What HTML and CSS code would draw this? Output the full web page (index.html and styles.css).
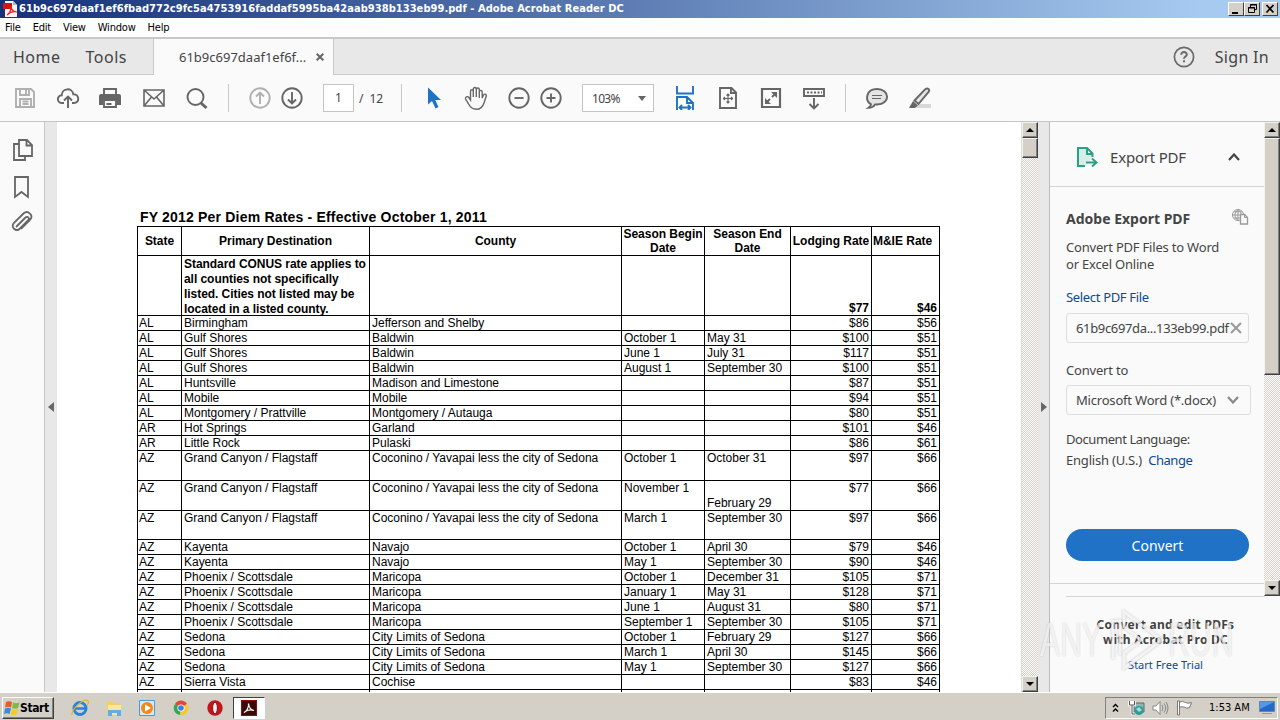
FILE: index.html
```html
<!DOCTYPE html>
<html lang="en">
<head>
  <meta charset="UTF-8" />
  <title>Adobe Acrobat Reader DC</title>
  <link rel="stylesheet" href="styles.css">
</head>
<body>

  <div class="titlebar">
    <svg class="app-icon" width="16" height="16" viewBox="0 0 16 16"><path d="M2 0h8l4 4v12H2z" fill="#f6f6f6"/><path d="M10 0l4 4h-4z" fill="#bbb"/><path d="M0 2h9v6H0z" fill="#d8150c"/><path d="M4 14c3-2 4-5 4-8 1 4 3 5 6 5-4-1-7 0-10 3z" fill="none" stroke="#e22" stroke-width="1.2"/></svg>
    <span class="title-text">61b9c697daaf1ef6fbad772c9fc5a4753916faddaf5995ba42aab938b133eb99.pdf - Adobe Acrobat Reader DC</span>
    <div class="window-buttons">
      <button class="win-btn"><svg width="14" height="12" viewBox="0 0 14 12"><path d="M3 9h6v2H3z"/></svg></button>
      <button class="win-btn"><svg width="14" height="12" viewBox="0 0 14 12" fill="none" stroke="#000"><path d="M5.500 4V1.500h6v5H9.500M5 2h7M3.500 4.500h6v5h-6zM3 5h7"/></svg></button>
      <button class="win-btn close"><svg width="14" height="12" viewBox="0 0 14 12" fill="none" stroke="#000" stroke-width="1.700"><path d="M3.500 2l7 7.500M10.500 2l-7 7.500"/></svg></button>
    </div>
  </div>

  <nav class="menubar">
    <span>File</span><span>Edit</span><span>View</span><span>Window</span><span>Help</span>
  </nav>

  <div class="tabs">
    <div class="tabs-left">
      <span class="tab-home">Home</span>
      <span class="tab-tools">Tools</span>
    </div>
    <div class="tab-doc">
      <span>61b9c697daaf1ef6f...</span>
      <svg width="8" height="8" viewBox="0 0 8 8" stroke="#666" stroke-width="2"><path d="M.7.7l6.600 6.600M7.300.7L.7 7.300"/></svg>
    </div>
    <div class="tabs-right">
      <svg width="22" height="22" viewBox="0 0 22 22" fill="none" stroke="#6a6a6a"><circle cx="11" cy="11" r="9.600" stroke-width="1.700"/><path d="M8.200 8.800c0-3.800 5.700-3.400 5.600-.3 0 2-2.800 2-2.800 4.300M11 14.300v2" stroke-width="2"/></svg>
      <span>Sign In</span>
    </div>
  </div>

  <div class="toolbar">
    <svg class="icon light" viewBox="0 0 24 24"><path d="M3 3h15l3 3v15H3zM7 3v6h9V3M13 4v4M7 21v-8h11v8M9.500 15.500h6M9.500 18h6"/></svg>
    <svg class="icon" viewBox="0 0 24 24"><path d="M8 17H6.500C.5 17 .5 9.500 5.700 9.300 6 1.500 16.500 1.500 17.300 8.300 23.500 8 24 17 18 17h-2M12 22V11M8 14.500l4-4 4 4"/></svg>
    <svg class="icon" viewBox="1 0 24 24"><path d="M6 8V3h12v5"/><path d="M3 8h18q2 0 2 2v9h-4v-5H5v5H1v-9q0-2 2-2z" fill="#666" stroke="none"/><path d="M6 14h12v7H6zM8.500 18h5" /></svg>
    <svg class="icon" viewBox="0 0 24 24"><path d="M2 4h20v16H2zM2 4l10 9 10-9M2 20l7.500-9M22 20l-7.500-9" stroke-width="1.600"/></svg>
    <svg class="icon" viewBox="0 0 24 24"><circle cx="10.500" cy="11" r="8"/><path d="M16 17l5.500 5" stroke-width="3"/></svg>
    <span class="sep"></span>
    <svg class="icon light pair" viewBox="0 0 24 24"><circle cx="12" cy="12" r="9.700"/><path d="M12 18V7M8 10.500l4-4 4 4"/></svg>
    <svg class="icon" viewBox="0 0 24 24"><circle cx="12" cy="12" r="9.700"/><path d="M12 6v11M8 13.500l4 4 4-4"/></svg>
    <span class="page-box">1</span>
    <span class="page-total">/&nbsp; 12</span>
    <span class="sep sep-nav"></span>
    <svg class="icon pointer" viewBox="0 0 24 24"><path d="M6 1.500v17l4-3.500 3.500 7.500 3-1.500-3.300-7H19z"/></svg>
    <svg class="icon hand" viewBox="0 0 24 24"><path d="M6.500 14V5.500c0-2.300 2.800-2.300 2.800 0V11 3.200c0-2.300 3-2.300 3 0V11 3.700c0-2.300 3-2.300 3 0V12 6c0-2.200 2.900-2.200 2.900 0v6l1-2.500c1-2.300 3.800-1.300 3 .8L20 17c-1.200 4-3.500 6.300-7.700 6.300-4 0-6-2-7.500-5L1.600 13c-.8-2 2-3.200 3.200-1.500z" stroke-width="1.400"/></svg>
    <svg class="icon" viewBox="0 0 24 24"><circle cx="12" cy="12" r="9.700"/><path d="M7.500 12h9"/></svg>
    <svg class="icon pair" viewBox="0 0 24 24"><circle cx="12" cy="12" r="9.700"/><path d="M7.500 12h9M12 7.500v9"/></svg>
    <span class="zoom-select">103%<i class="caret"></i></span>
    <svg class="icon blue" viewBox="0 0 24 24"><path d="M4 0v7.500h16V0M4 24V11h10l6 6v7M14 11v6h6M6.500 21.500h10M9 19l-2.500 2.500L9 24M15 19l2.500 2.500L15 24"/></svg>
    <svg class="icon" viewBox="0 0 24 24"><path d="M4 2h11.500L20 6.500V22H4zM15 2v5h5"/><path d="M12 8.500v8M8 12.500h8M10.500 9.500L12 8l1.500 1.500M10.500 15.500L12 17l1.500-1.500M9 11l-1.500 1.500L9 14M15 11l1.500 1.500L15 14" stroke-width="1.200"/></svg>
    <svg class="icon" viewBox="0 0 24 24"><path d="M3 3h18v18H3z" stroke-width="2.200"/><path d="M8 16l3-3M13 11l3-3"/><path d="M6 12v6h6zM18 12V6h-6z" fill="#666" stroke="none"/></svg>
    <svg class="icon" viewBox="0 0 24 24"><path d="M2 3h20v7H2zM12 12v10M7.500 18l4.500 4.500 4.500-4.500"/><path d="M5 6.500h15" stroke-dasharray="2 1.500"/></svg>
    <span class="sep"></span>
    <svg class="icon" viewBox="0 0 24 24"><path d="M6 18.300c-6.500-4-5-15.300 6-15.300 13.500 0 13.500 15.500 0 15.500l-2-.1c-1.500 2.300-4 3.300-6.500 3.300 1.500-1 2.300-2 2.500-3.400z" fill="#e4e4e4"/><path d="M7 9.500h10M7 12.500h9" stroke-width="1.100"/></svg>
    <svg class="icon" viewBox="0 0 24 24"><path d="M10 18h13v4H8z" fill="#d8d8d8" stroke="none"/><path d="M6.500 14.500L17.300 3.200c2.400-2 5 .5 3.300 2.700L10.500 18z" fill="#e4e4e4"/><path d="M5 15l5 4.500L7 22H1z" fill="#666" stroke="none"/></svg>
  </div>

  <main class="workspace">
    <aside class="nav-pane">
      <svg viewBox="0 0 24 24"><path d="M8 2h8l5 5v11H8zM15.500 2v5.500H21M8 6H3v16h11v-3"/></svg>
      <svg viewBox="0 0 24 24"><path d="M4 2h13v20l-6.500-5L4 22z"/></svg>
      <svg viewBox="0 0 24 24"><path d="M6 17l9.500-9.500c2-2 4.500.7 2.700 2.600L10 18.500c-4 4-10-1.500-6-5.700L13.500 3.500c4.500-4 10.500 2 6.500 6.300l-9 9"/></svg>
    </aside>
    <div class="gutter"><i class="collapse-left"></i></div>

    <section class="page">
      <h1>FY 2012 Per Diem Rates - Effective October 1, 2011</h1>
      <table class="rates">
        <colgroup><col class="c-state"><col class="c-dest"><col class="c-county"><col class="c-begin"><col class="c-end"><col class="c-lodging"><col class="c-mie"></colgroup>
        <tr class="head"><th>State</th><th>Primary Destination</th><th>County</th><th>Season Begin Date</th><th>Season End Date</th><th>Lodging Rate</th><th>M&amp;IE Rate</th></tr>
        <tr class="standard"><td></td><td><div class="note">Standard CONUS rate applies to all counties not specifically listed. Cities not listed may be located in a listed county.</div></td><td></td><td></td><td></td><td>$77</td><td>$46</td></tr>
        <tr><td>AL</td><td>Birmingham</td><td>Jefferson and Shelby</td><td></td><td></td><td>$86</td><td>$56</td></tr>
        <tr><td>AL</td><td>Gulf Shores</td><td>Baldwin</td><td>October 1</td><td>May 31</td><td>$100</td><td>$51</td></tr>
        <tr><td>AL</td><td>Gulf Shores</td><td>Baldwin</td><td>June 1</td><td>July 31</td><td>$117</td><td>$51</td></tr>
        <tr><td>AL</td><td>Gulf Shores</td><td>Baldwin</td><td>August 1</td><td>September 30</td><td>$100</td><td>$51</td></tr>
        <tr><td>AL</td><td>Huntsville</td><td>Madison and Limestone</td><td></td><td></td><td>$87</td><td>$51</td></tr>
        <tr><td>AL</td><td>Mobile</td><td>Mobile</td><td></td><td></td><td>$94</td><td>$51</td></tr>
        <tr><td>AL</td><td>Montgomery / Prattville</td><td>Montgomery / Autauga</td><td></td><td></td><td>$80</td><td>$51</td></tr>
        <tr><td>AR</td><td>Hot Springs</td><td>Garland</td><td></td><td></td><td>$101</td><td>$46</td></tr>
        <tr><td>AR</td><td>Little Rock</td><td>Pulaski</td><td></td><td></td><td>$86</td><td>$61</td></tr>
        <tr class="tall"><td>AZ</td><td>Grand Canyon / Flagstaff</td><td>Coconino / Yavapai less the city of Sedona</td><td>October 1</td><td>October 31</td><td>$97</td><td>$66</td></tr>
        <tr class="tall"><td>AZ</td><td>Grand Canyon / Flagstaff</td><td>Coconino / Yavapai less the city of Sedona</td><td>November 1</td><td class="low">February 29</td><td>$77</td><td>$66</td></tr>
        <tr class="tall short"><td>AZ</td><td>Grand Canyon / Flagstaff</td><td>Coconino / Yavapai less the city of Sedona</td><td>March 1</td><td>September 30</td><td>$97</td><td>$66</td></tr>
        <tr><td>AZ</td><td>Kayenta</td><td>Navajo</td><td>October 1</td><td>April 30</td><td>$79</td><td>$46</td></tr>
        <tr><td>AZ</td><td>Kayenta</td><td>Navajo</td><td>May 1</td><td>September 30</td><td>$90</td><td>$46</td></tr>
        <tr><td>AZ</td><td>Phoenix / Scottsdale</td><td>Maricopa</td><td>October 1</td><td>December 31</td><td>$105</td><td>$71</td></tr>
        <tr><td>AZ</td><td>Phoenix / Scottsdale</td><td>Maricopa</td><td>January 1</td><td>May 31</td><td>$128</td><td>$71</td></tr>
        <tr><td>AZ</td><td>Phoenix / Scottsdale</td><td>Maricopa</td><td>June 1</td><td>August 31</td><td>$80</td><td>$71</td></tr>
        <tr><td>AZ</td><td>Phoenix / Scottsdale</td><td>Maricopa</td><td>September 1</td><td>September 30</td><td>$105</td><td>$71</td></tr>
        <tr><td>AZ</td><td>Sedona</td><td>City Limits of Sedona</td><td>October 1</td><td>February 29</td><td>$127</td><td>$66</td></tr>
        <tr><td>AZ</td><td>Sedona</td><td>City Limits of Sedona</td><td>March 1</td><td>April 30</td><td>$145</td><td>$66</td></tr>
        <tr><td>AZ</td><td>Sedona</td><td>City Limits of Sedona</td><td>May 1</td><td>September 30</td><td>$127</td><td>$66</td></tr>
        <tr><td>AZ</td><td>Sierra Vista</td><td>Cochise</td><td></td><td></td><td>$83</td><td>$46</td></tr>
        <tr><td></td><td></td><td></td><td></td><td></td><td></td><td></td></tr>
      </table>
    </section>

    <div class="scrollbar doc-scroll">
      <span class="sb-btn"><i class="up"></i></span>
      <span class="sb-thumb"></span>
      <span class="sb-btn last"><i class="down"></i></span>
    </div>
    <div class="gutter right"><i class="collapse-right"></i></div>

    <aside class="tools-pane">
      <div class="tools-scroll">
        <div class="tools-content">
          <div class="export-head">
            <svg width="22" height="22" viewBox="0 0 22 22" fill="none" stroke="#2ba084" stroke-width="2"><path d="M9 20H2V2h9l5.500 5.500V11M11 2v6h5.500" fill="#d5eee7"/><path d="M10 16.500h9M16 12.500l4.500 4-4.500 4"/></svg>
            <span>Export PDF</span>
            <svg class="chev" width="12" height="8" viewBox="0 0 12 8" fill="none" stroke="#444" stroke-width="2.200"><path d="M1 7l5-5.500L11 7"/></svg>
          </div>
          <div class="export-body">
            <div class="export-title"><b>Adobe Export PDF</b>
              <svg width="17" height="16" viewBox="0 0 17 16" fill="none" stroke="#999"><circle cx="6" cy="6" r="5.500"/><path d="M.5 6h10M6 .5v11M2 2.800h8M2 9h6M6 .5c-4 3-4 8 0 11M6 .5c3 2 3 4 3 5"/><path d="M8.500 5.500h4l3 3v6.500h-7z" fill="#fafafa" stroke-width="1.300"/><path d="M12.500 5.500v3h3"/></svg>
            </div>
            <p class="desc">Convert PDF Files to Word<br>or Excel Online</p>
            <a class="select-file">Select PDF File</a>
            <div class="file-box source"><span>61b9c697da...133eb99.pdf</span><svg width="12" height="12" viewBox="0 0 12 12" stroke="#999" stroke-width="2"><path d="M1 1l10 10M11 1L1 11"/></svg></div>
            <p class="convert-to">Convert to</p>
            <div class="file-box format"><span>Microsoft Word (*.docx)</span><svg width="12" height="8" viewBox="0 0 12 8" fill="none" stroke="#888" stroke-width="2.200"><path d="M1 1l5 5.500L11 1"/></svg></div>
            <p class="doc-lang">Document Language:</p>
            <p class="lang">English (U.S.) <a>Change</a></p>
            <button class="convert-btn">Convert</button>
          </div>
          <div class="pane-end"></div>
        </div>
        <div class="scrollbar pane-scroll">
          <span class="sb-btn"><i class="up"></i></span>
          <span class="sb-thumb"></span>
          <span class="sb-btn last"><i class="down"></i></span>
        </div>
      </div>
      <div class="promo">
        <b>Convert and edit PDFs<br>with Acrobat Pro DC</b>
        <a>Start Free Trial</a>
      </div>
    </aside>
  </main>

  <footer class="taskbar">
    <button class="start">
      <svg width="16" height="16" viewBox="0 0 16 16"><path d="M2 2q3-1.500 6 0L7 7.500q-3-1.500-6 0z" fill="#e8592b"/><path d="M9 2.500q3 1.500 6.500 0L14 8q-3 1.500-6 0z" fill="#7dbb42"/><path d="M1 8.500q3-1.500 6 0L5.500 14q-3-1.500-5.500 0z" fill="#3c8ad8"/><path d="M8 9q3 1.500 6 0l-1.500 5.500q-3 1.500-6 0z" fill="#f8c832"/></svg>
      Start
    </button>
    <div class="quick">
      <svg viewBox="0 0 18 18"><circle cx="9" cy="9.500" r="6" fill="none" stroke="#2b83d8" stroke-width="3"/><path d="M4 9.500h11" stroke="#2b83d8" stroke-width="2.500"/><path d="M1 16C0 11 13-2 17 2c1 1 0 3-1 4" fill="none" stroke="#e5b52e" stroke-width="1.300"/></svg>
      <svg viewBox="0 0 18 18"><path d="M2 2h6l1 2h7v11H2z" fill="#efcf66"/><path d="M3 6h13v10H3z" fill="#f9e79f"/><path d="M3 11h13v6h-4v-3H7v3H3z" fill="#62aee0"/></svg>
      <svg viewBox="0 0 18 18"><path d="M1.500 1.500h15v15h-15z" fill="#d4e9fa" stroke="#4d9ad8"/><circle cx="9" cy="9" r="6" fill="#f28a18"/><path d="M7 5.500v7l6-3.500z" fill="#fff"/></svg>
      <svg viewBox="0 0 18 18"><path d="M9 9L3 5a7 7 0 0 1 12 0z" fill="#df4737"/><path d="M9 9L3 5a7 7 0 0 0 5 11z" fill="#35a653"/><path d="M9 9l6-4a7 7 0 0 1-7 11z" fill="#f6c831"/><circle cx="9" cy="9" r="3.600" fill="#fff"/><circle cx="9" cy="9" r="2.800" fill="#3f7fe0"/></svg>
      <svg viewBox="0 0 18 18"><circle cx="9" cy="9" r="7.700" fill="#c3161c"/><ellipse cx="9" cy="9" rx="2.400" ry="5.800" fill="#eee" stroke="#8b0d10"/></svg>
    </div>
    <div class="task-active">
      <svg width="16" height="16" viewBox="0 0 16 16"><path d="M0 0h16v16H0z" fill="#8b0d0d"/><path d="M1 1h14v14H1z" fill="#3d0808"/><path d="M3 12.500C6 11 8 7 7.500 3.500 8 8 10 10 13 10.500 10 9.500 6 10 3 12.500z" fill="none" stroke="#fff" stroke-width="1.200"/></svg>
    </div>
    <div class="tray">
      <svg class="tray-up" width="7" height="10" viewBox="0 0 7 10" fill="none" stroke="#000" stroke-width="1.400"><path d="M1 4l2.500-2.500L6 4M1 8.500L3.500 6 6 8.500"/></svg>
      <svg class="tray-net" width="17" height="16" viewBox="0 0 17 16"><path d="M6 3h10v9H6z" fill="#8fb7b5" stroke="#546b6b"/><circle cx="11" cy="10.500" r="4.500" fill="#2d9c9c"/><path d="M8 9l3-2 3 3-3 2z" fill="#9ee0c8"/><path d="M1.500 1v4h5V1M4 1v9M4 9v5h3" fill="none" stroke="#fff" stroke-width="2.600"/><path d="M1.500 1v4h5V1M4 5v9h3" fill="none" stroke="#555"/></svg>
      <svg class="tray-vol" width="17" height="16" viewBox="0 0 17 16" fill="none" stroke="#888"><path d="M1 6h3l4-4.500v13L4 10H1z" fill="#fff"/><path d="M10 5q2 3 0 6M12 3.500q3.500 4.500 0 9M14 2q4 6 0 12"/></svg>
      <svg class="tray-flag" width="17" height="16" viewBox="0 0 17 16" fill="#fff" stroke="#777"><path d="M3.500 2q3-1.500 6 .5 2 1.200 6 .2l-2 5q-3 1-5-.5-2-1-5 0z"/><path d="M1.500 1h2v14h-2z"/></svg>
      <span class="clock">1:53 AM</span>
      <svg class="tray-desk" width="16" height="14" viewBox="0 0 16 14"><path d="M.5.5h15v10H.5z" fill="#2469c8" stroke="#5f88b8"/><path d="M1 1h14L1 8z" fill="#5798e4"/><path d="M3 12.500h10" stroke="#999"/></svg>
    </div>
  </footer>

  <div class="watermark">
    <span>ANY</span>
    <svg width="58" height="66" viewBox="0 0 58 66"><path d="M5 52V14h7v34"/><path d="M16 5l38 28-38 28V46l17-13-17-13z"/></svg>
    <span>RUN</span>
  </div>

</body>
</html>
```
FILE: styles.css
```css
:root {
  --ui: "Noto Sans", sans-serif;
  --win: "DejaVu Sans Condensed", "DejaVu Sans", sans-serif;
  --face: #d4d0c8;
  --pane: #fafafa;
  --line: #c8c8c8;
  --blue: #1f72c6;
  --link: #0b4a92;
}

* {
  box-sizing: border-box;
}

body {
  margin: 0;
  width: 1280px;
  height: 720px;
  overflow: hidden;
  display: flex;
  flex-direction: column;
  position: relative;
  font-family: var(--ui);
  background: var(--pane);
  color: #444;
}

svg {
  display: block;
  flex: none;
}

p {
  margin: 0;
}

button {
  font-family: inherit;
  padding: 0;
}

/* window chrome */
.titlebar {
  height: 18px;
  flex: none;
  display: flex;
  align-items: center;
  padding: 0 2px 0 3px;
  background: linear-gradient(to right, #15317b, #5676ae 45%, #a6caf0 94%);
  color: #fff;
  font: bold 11px/18px var(--win);
}

.title-text {
  white-space: nowrap;
  letter-spacing: 0.055px;
}

.window-buttons {
  display: flex;
  margin-left: auto;
}

.win-btn {
  width: 16px;
  height: 14px;
  background: var(--face);
  border: 1px solid;
  border-color: #fff #404040 #404040 #fff;
}

.win-btn.close {
  margin-left: 2px;
}

.menubar {
  height: 19px;
  flex: none;
  display: flex;
  gap: 12px;
  padding-left: 5px;
  background: #fdfdfd;
  color: #000;
  font: 11px/20px var(--win);
  letter-spacing: -0.2px;
}

.tabs {
  height: 38px;
  flex: none;
  display: flex;
  border-top: 2px solid var(--line);
  font-size: 16px;
  line-height: 36px;
  letter-spacing: 0.5px;
}

.tabs-left {
  width: 154px;
  background: #e8e8e8;
  border-right: 1px solid var(--line);
  border-bottom: 1px solid var(--line);
  padding-left: 13px;
  display: flex;
  gap: 25px;
}

.tab-doc {
  width: 179px;
  display: flex;
  align-items: center;
  justify-content: space-between;
  padding: 0 9px 0 25px;
  font-size: 13px;
  letter-spacing: 0;
}

.tabs-right {
  flex: 1;
  background: #e8e8e8;
  border-left: 1px solid var(--line);
  border-bottom: 1px solid var(--line);
  display: flex;
  align-items: center;
  justify-content: flex-end;
  gap: 20px;
  padding-right: 11px;
  letter-spacing: 0.3px;
}

.toolbar {
  height: 47px;
  flex: none;
  display: flex;
  align-items: center;
  gap: 19px;
  padding-left: 13px;
  border-bottom: 1px solid #c2c8c0;
}

.icon {
  width: 24px;
  height: 24px;
  fill: none;
  stroke: #666;
  stroke-width: 1.9;
}

.icon.light {
  stroke: #b0b0b0;
}

.icon.pair + .icon {
  margin-left: -11px;
}

.icon.pair:not(.light) {
  margin-left: -11px;
}

.icon.blue {
  stroke: var(--blue);
}

.icon.pointer {
  fill: var(--blue);
  stroke: none;
  margin-left: 1px;
}

.icon.hand {
  margin-left: -1px;
}

.sep {
  width: 1px;
  height: 28px;
  background: var(--line);
}

.sep-nav {
  margin-left: -1px;
}

.page-box {
  width: 31px;
  height: 28px;
  background: #fff;
  border: 1px solid #c4c4c4;
  text-align: center;
  font-size: 12px;
  line-height: 26px;
}

.page-total {
  width: 24px;
  margin-left: -14px;
  font-size: 12px;
  letter-spacing: -0.1px;
  white-space: nowrap;
}

.zoom-select {
  width: 72px;
  height: 28px;
  background: #fff;
  border: 1px solid #c4c4c4;
  display: flex;
  align-items: center;
  justify-content: space-between;
  padding: 0 7px 0 9px;
  font-size: 12px;
  letter-spacing: -0.7px;
}

.caret {
  border: 4px solid transparent;
  border-top: 5px solid #666;
  border-bottom: 0;
}

/* workspace */
.workspace {
  height: 570px;
  flex: none;
  display: flex;
}

.workspace > * {
  flex: none;
}

.nav-pane {
  width: 45px;
  border-right: 1px solid var(--line);
  padding: 16px 0 0 11px;
  display: flex;
  flex-direction: column;
  gap: 13px;
}

.nav-pane svg {
  width: 24px;
  height: 24px;
  fill: none;
  stroke: #666;
  stroke-width: 1.8;
}

.nav-pane svg:last-child {
  margin-top: -2px;
  margin-left: -1px;
}

.gutter {
  width: 12px;
  background: #e8e8e8;
  display: flex;
  align-items: center;
  justify-content: center;
}

.gutter.right {
  border-right: 1px solid #bbb;
}

.collapse-left,
.collapse-right {
  border: 5px solid transparent;
  border-right: 6px solid #666;
  border-left: 0;
}

.collapse-right {
  border-right: 0;
  border-left: 6px solid #666;
}

.page {
  width: 964px;
  overflow: hidden;
  background: #fff;
  padding: 87px 0 0 80px;
  font-family: "Liberation Sans", Arial, sans-serif;
  color: #000;
}

.page h1 {
  margin: 0 0 0 3px;
  height: 17px;
  font-size: 14px;
  line-height: 17px;
  letter-spacing: 0.19px;
}

.rates {
  width: 803px;
  table-layout: fixed;
  border-spacing: 0;
  border-top: 1px solid #000;
  border-left: 1px solid #000;
  font-size: 12px;
  line-height: 14px;
  letter-spacing: -0.02px;
}

.c-state { width: 44px; }
.c-dest { width: 188px; }
.c-county { width: 252px; }
.c-begin { width: 83px; }
.c-end { width: 86px; }
.c-lodging { width: 81px; }
.c-mie { width: 68px; }

.rates tr {
  height: 15px;
}

.rates th,
.rates td {
  padding: 0 2px;
  border-right: 1px solid #000;
  border-bottom: 1px solid #000;
  vertical-align: top;
  white-space: nowrap;
}

.rates td:first-child {
  padding-left: 1px;
}

.rates td:nth-child(n+6) {
  text-align: right;
}

.rates .head {
  height: 29px;
}

.rates .head th {
  padding: 0 1px;
  vertical-align: middle;
  white-space: normal;
}

.rates .head th:nth-child(n+6) {
  white-space: nowrap;
}

.rates .head th:last-child {
  text-align: left;
}

.rates .standard {
  height: 60px;
  font-weight: bold;
}

.rates .standard td {
  padding-right: 0;
}

.rates .standard td:nth-child(n+6) {
  vertical-align: bottom;
  padding-right: 2px;
}

.note {
  height: 59px;
  padding-top: 0.6px;
  white-space: normal;
  line-height: 15.3px;
  letter-spacing: -0.05px;
}

.rates .tall {
  height: 30px;
}

.rates .tall.short {
  height: 29px;
}

.rates td.low {
  vertical-align: bottom;
}

/* classic scrollbars */
.scrollbar {
  flex: none;
  display: flex;
  flex-direction: column;
  background: repeating-conic-gradient(#d4d0c8 0 25%, #fff 0 50%) 0 0 / 2px 2px;
}

.doc-scroll {
  width: 17px;
  border-left: 1px solid #ddd;
}

.pane-scroll {
  width: 16px;
}

.sb-btn,
.sb-thumb {
  height: 16px;
  background: var(--face);
  border: 1px solid;
  border-color: #f4f2ee #404040 #404040 #f4f2ee;
  box-shadow: inset -1px -1px #808080;
  display: flex;
  align-items: center;
  justify-content: center;
}

.doc-scroll .sb-thumb {
  height: 20px;
}

.pane-scroll .sb-thumb {
  height: 237px;
}

.sb-btn.last {
  margin-top: auto;
}

.up,
.down {
  border: 4px solid transparent;
  border-bottom: 4px solid #000;
  border-top: 0;
}

.down {
  border-bottom: 0;
  border-top: 4px solid #000;
}

/* export pane */
.tools-pane {
  width: 230px;
  font-size: 13px;
  letter-spacing: -0.2px;
}

.tools-scroll {
  display: flex;
  height: 474px;
}

.tools-content {
  flex: 1;
  min-width: 0;
}

.export-head {
  height: 65px;
  border-bottom: 1px solid #d4d4d4;
  display: flex;
  align-items: center;
  padding: 5px 24px 0 26px;
  font-size: 15px;
}

.export-head span {
  margin-left: 12px;
}

.chev {
  margin-left: auto;
}

.export-body {
  padding: 22px 15px 0 16px;
}

.export-title {
  height: 20px;
  display: flex;
  justify-content: space-between;
  font-size: 14px;
  line-height: 20px;
  letter-spacing: 0;
}

.desc {
  margin-top: 10px;
  line-height: 17px;
}

.select-file,
.lang a,
.promo a {
  color: var(--link);
}

.select-file {
  display: block;
  margin-top: 15px;
  line-height: 18px;
  letter-spacing: -0.33px;
}

.file-box {
  width: 183px;
  height: 30px;
  margin-top: 7px;
  border: 1px solid #ddd;
  border-radius: 3px;
  display: flex;
  align-items: center;
  justify-content: space-between;
  padding: 0 6px 0 9px;
  white-space: nowrap;
}

.file-box.source {
  letter-spacing: -0.35px;
}

.convert-to {
  margin-top: 18px;
  line-height: 18px;
}

.file-box.format {
  width: 185px;
  margin-top: 6px;
  padding-right: 11px;
}

.doc-lang {
  margin-top: 15px;
  line-height: 18px;
  letter-spacing: -0.42px;
}

.lang {
  margin-top: 3px;
  line-height: 18px;
}

.lang a {
  margin-left: 3px;
  letter-spacing: -0.45px;
}

.convert-btn {
  display: block;
  width: 183px;
  height: 32px;
  margin-top: 60px;
  border: 0;
  border-radius: 16px;
  background: var(--blue);
  color: #fff;
  font-size: 14px;
}

.pane-end {
  margin-top: 22px;
  border-top: 1px solid #d4d4d4;
}

.promo {
  margin-left: 16px;
  border-top: 1px solid #d4d4d4;
  padding-top: 20px;
  width: 199px;
  text-align: center;
  font-size: 12px;
  line-height: 15px;
}

.promo b,
.promo a {
  display: block;
}

.promo b {
  letter-spacing: 0.28px;
}

.promo a {
  margin-top: 10px;
  font-size: 11px;
  letter-spacing: 0;
}

/* taskbar */
.taskbar {
  height: 28px;
  flex: none;
  background: var(--face);
  border-top: 1px solid #fff;
  display: flex;
  align-items: center;
  padding: 2px 2px 0;
  font-family: var(--win);
  color: #000;
}

.start {
  width: 52px;
  height: 22px;
  background: var(--face);
  border: 1px solid;
  border-color: #fff #404040 #404040 #fff;
  box-shadow: inset -1px -1px #808080;
  display: flex;
  align-items: center;
  padding-left: 1px;
  font: bold 12px var(--win);
  letter-spacing: -0.4px;
}

.quick {
  display: flex;
  gap: 15px;
  margin-left: 17px;
}

.quick svg {
  width: 18px;
  height: 18px;
}

.quick svg + svg {
  margin-left: 0.7px;
}

.task-active {
  width: 32px;
  height: 22px;
  margin-left: 9px;
  background: #fff;
  border: 1px solid;
  border-color: #404040 #fff #fff #404040;
  display: flex;
  align-items: center;
  justify-content: center;
}

.tray {
  width: 173px;
  height: 22px;
  margin-left: auto;
  border: 1px solid;
  border-color: #808080 #fff #fff #808080;
  display: flex;
  align-items: center;
  padding-left: 6px;
}

.tray-net { margin-left: 9px; }
.tray-vol { margin-left: 7px; }
.tray-flag { margin-left: 7px; }

.clock {
  width: 41px;
  margin-left: 16px;
  font-size: 11px;
  white-space: nowrap;
}

.tray-desk {
  margin-left: 9px;
}

/* watermark over the promo block */
.watermark {
  position: absolute;
  left: 1040px;
  top: 607px;
  width: 193px;
  display: flex;
  align-items: center;
  justify-content: space-between;
  font: 48px/66px "Liberation Sans", sans-serif;
  color: rgba(255, 255, 255, 0.7);
  text-shadow: 0 0 2px rgba(0, 0, 0, 0.2);
  pointer-events: none;
}

.watermark span {
  width: 65px;
  transform: scaleX(0.63);
  transform-origin: left;
}

.watermark svg {
  fill: none;
  stroke: rgba(255, 255, 255, 0.75);
  stroke-width: 3;
  filter: drop-shadow(0 0 1px rgba(0, 0, 0, 0.3));
}
```
